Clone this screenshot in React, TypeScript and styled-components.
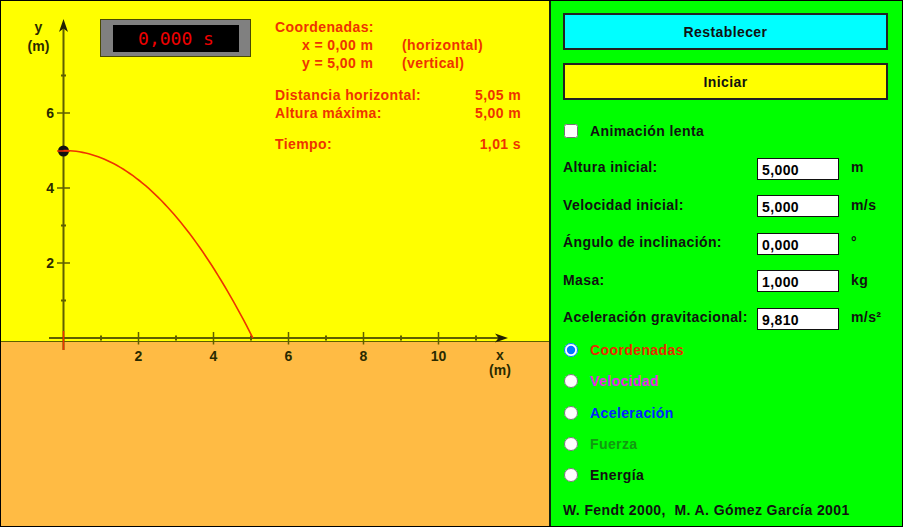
import React from "react";
import styled, { createGlobalStyle } from "styled-components";

const GlobalStyle = createGlobalStyle`
  html, body { margin: 0; padding: 0; background: #ffffff; }
  body { font-family: "Liberation Sans", Arial, sans-serif; }
`;

const X0 = 63.5;
const Y0 = 338;
const S = 37.5;
const AXIS = "#5f5f00";
const RED = "#ee3300";

const Frame = styled.div`
  width: 903px;
  height: 527px;
  box-sizing: border-box;
  border: 1px solid #000;
  display: flex;
  overflow: hidden;
`;

const Canvas = styled.div`
  position: relative;
  width: 548px;
  display: flex;
  flex-direction: column;
`;

const Sky = styled.div`
  height: 340px;
  background: #ffff00;
`;

const Ground = styled.div`
  flex: 1;
  background: #ffbb44;
  border-top: 1px solid ${AXIS};
`;

const Plot = styled.svg`
  position: absolute;
  left: 0;
  top: 0;
  font-family: "Liberation Sans", Arial, sans-serif;
  font-weight: bold;
  font-size: 14px;
`;

const Timer = styled.div`
  position: absolute;
  left: 99px;
  top: 18px;
  width: 151px;
  height: 38px;
  box-sizing: border-box;
  background: #808080;
  border: 1px solid #4a4a00;
  display: flex;
  align-items: center;
  justify-content: center;
  padding-left: 1px;
`;

const TimerScreen = styled.div`
  width: 126px;
  height: 27px;
  background: #000;
  color: #f00000;
  font-family: "DejaVu Sans Mono", "Liberation Mono", monospace;
  font-size: 18px;
  display: flex;
  align-items: center;
  justify-content: center;
`;

const Readout = styled.div`
  position: absolute;
  left: 274px;
  top: 17px;
  color: ${RED};
  font-size: 14px;
  font-weight: bold;
  letter-spacing: 0.4px;
  line-height: 18px;
  display: flex;
  flex-direction: column;
`;

const ReadRow = styled.div<{ $gap?: number; $indent?: number }>`
  display: flex;
  height: 18px;
  margin-top: ${(p) => p.$gap ?? 0}px;
  padding-left: ${(p) => p.$indent ?? 0}px;
  white-space: nowrap;
`;

const ReadCell = styled.span<{ $w?: number; $right?: boolean }>`
  width: ${(p) => (p.$w ? `${p.$w}px` : "auto")};
  text-align: ${(p) => (p.$right ? "right" : "left")};
`;

const Panel = styled.div`
  flex: 1;
  background: #00ff00;
  border-left: 2px solid #102010;
  padding: 12px 14px 0 12px;
  display: flex;
  flex-direction: column;
  color: #111;
  font-size: 14px;
  font-weight: bold;
  letter-spacing: 0.4px;
`;

const Button = styled.button<{ $bg: string; $gap?: number }>`
  height: 37px;
  width: 100%;
  margin: ${(p) => p.$gap ?? 0}px 0 0 0;
  box-sizing: border-box;
  border: 2px solid #222;
  background: ${(p) => p.$bg};
  color: #111;
  font-family: "Liberation Sans", Arial, sans-serif;
  font-size: 14px;
  font-weight: bold;
  letter-spacing: 0.4px;
  padding: 0;
  cursor: pointer;
`;

const CheckRow = styled.label`
  display: flex;
  align-items: center;
  gap: 12px;
  height: 22px;
  margin-top: 20px;
`;

const Box = styled.input`
  width: 14px;
  height: 14px;
  margin: 0 0 0 1px;
`;

const ParamRow = styled.div`
  display: grid;
  grid-template-columns: 194px 82px auto;
  grid-template-rows: 22px;
  align-items: center;
  height: 22px;
  margin-top: 15.5px;
`;

const ParamLabel = styled.span`
  padding-bottom: 3px;
  white-space: nowrap;
`;

const Unit = styled.span`
  margin-left: 12px;
  padding-bottom: 3px;
`;

const NumField = styled.input`
  width: 82px;
  height: 22px;
  box-sizing: border-box;
  border: 1px solid #111;
  background: #fff;
  padding: 2px 0 0 4px;
  font-family: "Liberation Sans", Arial, sans-serif;
  font-size: 14px;
  font-weight: bold;
  letter-spacing: 0.4px;
  color: #000;
  outline: none;
`;

const RadioRow = styled.label<{ $color: string; $gap: number }>`
  display: flex;
  align-items: center;
  gap: 12px;
  height: 20px;
  margin-top: ${(p) => p.$gap}px;
  color: ${(p) => p.$color};
`;

const Radio = styled.input`
  width: 14px;
  height: 14px;
  margin: 0 0 0 1px;
`;

const Footer = styled.div`
  height: 20px;
  margin-top: 15px;
  display: flex;
  align-items: center;
  white-space: pre;
`;

const params = [
  { label: "Altura inicial:", value: "5,000", unit: "m" },
  { label: "Velocidad inicial:", value: "5,000", unit: "m/s" },
  { label: "Ángulo de inclinación:", value: "0,000", unit: "°" },
  { label: "Masa:", value: "1,000", unit: "kg" },
  { label: "Aceleración gravitacional:", value: "9,810", unit: "m/s²" },
];

const radios = [
  { label: "Coordenadas", color: "#e82a00", checked: true },
  { label: "Velocidad", color: "#e82ae8" },
  { label: "Aceleración", color: "#0022ff" },
  { label: "Fuerza", color: "#119911" },
  { label: "Energía", color: "#111111" },
];

function trajectory() {
  const pts: string[] = [];
  const n = 60;
  for (let i = 0; i <= n; i++) {
    const t = i / n;
    const x = 5.05 * t;
    const y = 5 - 5 * t * t;
    pts.push(`${(X0 + S * x).toFixed(2)},${(Y0 - S * y).toFixed(2)}`);
  }
  return "M" + pts.join(" L");
}

function PlotArea() {
  const xTicks = Array.from({ length: 11 }, (_, i) => i + 1);
  const yTicks = Array.from({ length: 7 }, (_, i) => i + 1);
  return (
    <Plot width={548} height={525} viewBox="1 1 548 525">
      {/* y axis */}
      <line x1={X0} y1={26} x2={X0} y2={350} stroke={AXIS} strokeWidth={2} />
      <polygon
        points={`${X0},19 ${X0 - 4.5},32 ${X0},28.5 ${X0 + 4.5},32`}
        fill="#222200"
      />
      {/* x axis */}
      <line x1={49} y1={Y0} x2={502} y2={Y0} stroke={AXIS} strokeWidth={2} />
      <polygon
        points={`508,${Y0} 495,${Y0 - 4.5} 498.5,${Y0} 495,${Y0 + 4.5}`}
        fill="#222200"
      />
      {xTicks.map((i) => {
        const x = X0 + S * i;
        const major = i % 2 === 0;
        return (
          <g key={`x${i}`}>
            <line
              x1={x}
              x2={x}
              y1={major ? 332 : 335.5}
              y2={major ? 344.5 : 340.5}
              stroke={AXIS}
              strokeWidth={major ? 1.5 : 2}
            />
            {major && (
              <text x={x} y={361} textAnchor="middle" fill="#2a2a00">
                {i}
              </text>
            )}
          </g>
        );
      })}
      {yTicks.map((i) => {
        const y = Y0 - S * i;
        const major = i % 2 === 0;
        return (
          <g key={`y${i}`}>
            <line
              x1={major ? 57 : 61}
              x2={major ? 70 : 66}
              y1={y}
              y2={y}
              stroke={AXIS}
              strokeWidth={major ? 1.5 : 2}
            />
            {major && (
              <text x={54} y={y + 5} textAnchor="end" fill="#2a2a00">
                {i}
              </text>
            )}
          </g>
        );
      })}
      <text x={38.5} y={32} textAnchor="middle" fill="#2a2a00">
        y
      </text>
      <text x={38.5} y={51} textAnchor="middle" fill="#2a2a00">
        (m)
      </text>
      <text x={500} y={360} textAnchor="middle" fill="#2a2a00">
        x
      </text>
      <text x={500} y={375} textAnchor="middle" fill="#2a2a00">
        (m)
      </text>
      {/* coordinate markers */}
      <line x1={X0} x2={X0} y1={331} y2={350} stroke={RED} strokeWidth={1.5} />
      {/* projectile */}
      <circle cx={X0} cy={151} r={5.5} fill="#111" />
      <line x1={57} x2={70} y1={151} y2={151} stroke={RED} strokeWidth={1.5} />
      <path d={trajectory()} fill="none" stroke={RED} strokeWidth={1.6} />
    </Plot>
  );
}

export default function App() {
  return (
    <>
      <GlobalStyle />
      <Frame>
        <Canvas>
          <Sky />
          <Ground />
          <PlotArea />
          <Timer>
            <TimerScreen>0,000 s</TimerScreen>
          </Timer>
          <Readout>
            <ReadRow>Coordenadas:</ReadRow>
            <ReadRow $indent={27}>
              <ReadCell $w={100}>x = 0,00 m</ReadCell>
              <ReadCell>(horizontal)</ReadCell>
            </ReadRow>
            <ReadRow $indent={27}>
              <ReadCell $w={100}>y = 5,00 m</ReadCell>
              <ReadCell>(vertical)</ReadCell>
            </ReadRow>
            <ReadRow $gap={14}>
              <ReadCell $w={198}>Distancia horizontal:</ReadCell>
              <ReadCell $w={48} $right>
                5,05 m
              </ReadCell>
            </ReadRow>
            <ReadRow>
              <ReadCell $w={198}>Altura máxima:</ReadCell>
              <ReadCell $w={48} $right>
                5,00 m
              </ReadCell>
            </ReadRow>
            <ReadRow $gap={13}>
              <ReadCell $w={198}>Tiempo:</ReadCell>
              <ReadCell $w={48} $right>
                1,01 s
              </ReadCell>
            </ReadRow>
          </Readout>
        </Canvas>
        <Panel>
          <Button $bg="#00ffff">Restablecer</Button>
          <Button $bg="#ffff00" $gap={13}>
            Iniciar
          </Button>
          <CheckRow>
            <Box type="checkbox" />
            <span>Animación lenta</span>
          </CheckRow>
          {params.map((p) => (
            <ParamRow key={p.label}>
              <ParamLabel>{p.label}</ParamLabel>
              <NumField type="text" defaultValue={p.value} />
              <Unit>{p.unit}</Unit>
            </ParamRow>
          ))}
          {radios.map((r, i) => (
            <RadioRow key={r.label} $color={r.color} $gap={i === 0 ? 10.5 : 11.25}>
              <Radio type="radio" name="view" defaultChecked={r.checked} />
              <span>{r.label}</span>
            </RadioRow>
          ))}
          <Footer>W. Fendt 2000,  M. A. Gómez García 2001</Footer>
        </Panel>
      </Frame>
    </>
  );
}
